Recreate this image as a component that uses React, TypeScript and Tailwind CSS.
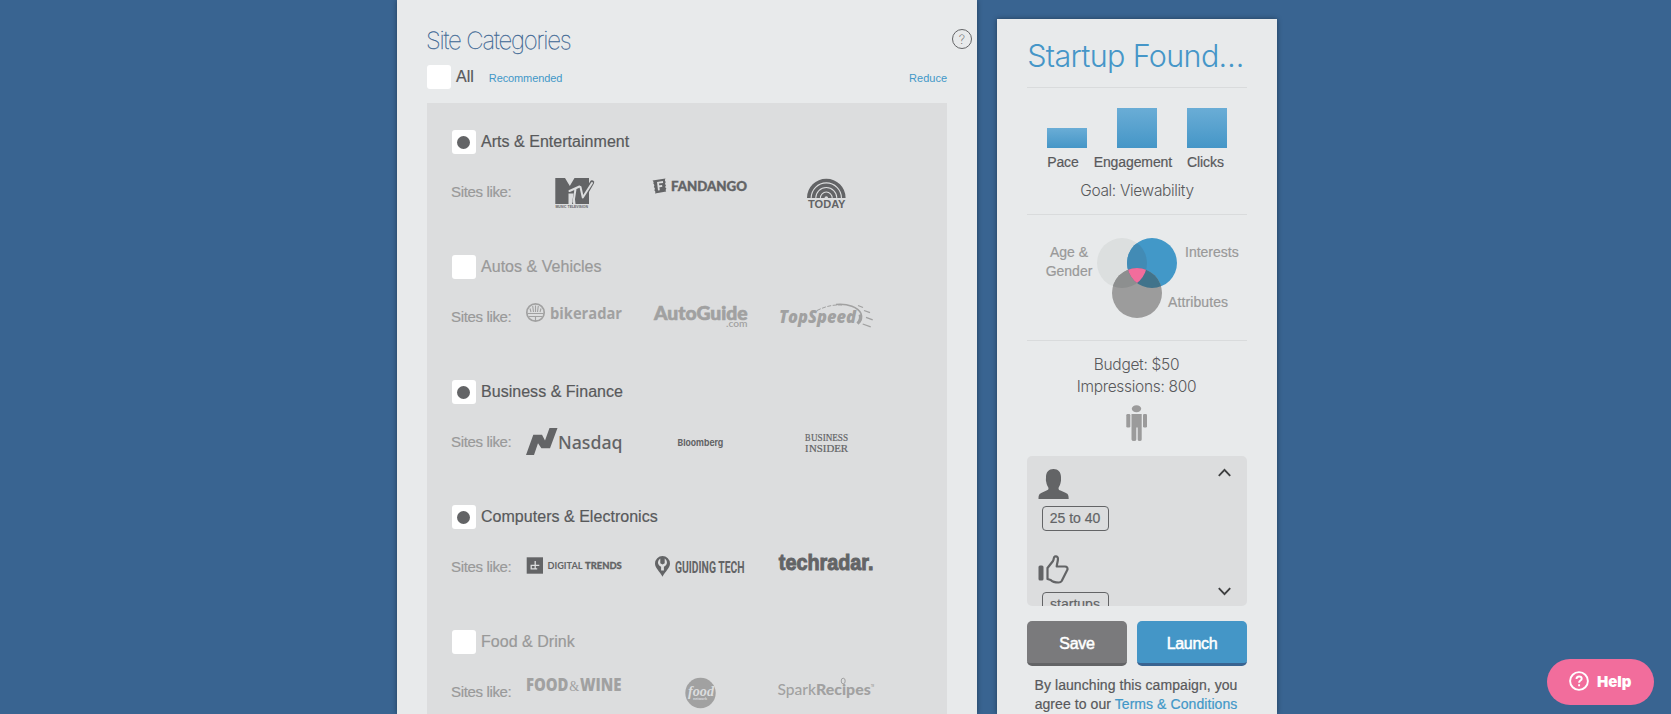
import type { ReactNode } from "react";

type Category = {
  name: string;
  checked: boolean;
  logos: ReactNode[];
};

const SANS = "font-['Liberation_Sans',Arial,sans-serif]";
const INTER = "font-['Inter',sans-serif]";

function Logo({ children }: { children: ReactNode }) {
  return (
    <svg width="96" height="32" viewBox="0 0 96 32" fill="currentColor" className="shrink-0 overflow-visible">
      {children}
    </svg>
  );
}

// Text stretched to the exact width of a wordmark
function Word({
  x,
  y,
  w,
  size,
  font = "Liberation Sans",
  weight = 700,
  italic = false,
  fill,
  children,
}: {
  x: number;
  y: number;
  w: number;
  size: number;
  font?: string;
  weight?: number;
  italic?: boolean;
  fill?: string;
  children: string;
}) {
  return (
    <text
      x={x}
      y={y}
      textLength={w}
      lengthAdjust="spacingAndGlyphs"
      fontSize={size}
      fontFamily={`"${font}", sans-serif`}
      fontWeight={weight}
      fontStyle={italic ? "italic" : "normal"}
      fill={fill}
    >
      {children}
    </text>
  );
}

const categories: Category[] = [
  {
    name: "Arts & Entertainment",
    checked: true,
    logos: [
      <Logo key="mtv">
        <path d="M29.3 0H39l4.8 8L48.500 0H63v26H49.500l-1-9-1.500 9h-5V15v11H29.3z" />
        <path d="M42.500 15.500h5L46 26h-3.500z" fill="#dcddde" />
        <path d="M54 8.500 57 20 66 4.500" fill="none" stroke="currentColor" strokeWidth="4.4" strokeLinecap="round" />
        <g fill="none" stroke="#dcddde" strokeWidth="2" strokeLinecap="round" strokeLinejoin="round">
          <path d="M43.500 13 53.500 8.500M49.500 11 47.500 24M54.500 9l2.300 10.500L66 5" />
        </g>
        <Word x={29.5} y={30} w={32.5} size={4}>MUSIC TELEVISION</Word>
      </Logo>,
      <Logo key="fandango">
        <path d="M.5 2.5 13.5.5c-.8 1.500-.8 2.500.3 3.500-1 1.200-1 2.400.2 3.300-1 1.300-1 2.300.4 3.200-.9 1-.9 1.900-.2 2.900L3 15.500c.7-1.500.4-2.500-.7-3.300 1-1.200.7-2.300-.5-3.200.9-1.300.7-2.500-.5-3.200.6-1.100.3-2.100-.8-3.300z" />
        <path d="M11 4 6 4.700l.9 7.600M6.500 8.500l3.700-.6" stroke="#dcddde" strokeWidth="1.8" fill="none" />
        <g stroke="currentColor" strokeWidth="0.4">
          <Word x={19} y={13.2} w={76} size={14} font="Lato" weight={900}>FANDANGO</Word>
        </g>
      </Logo>,
      <Logo key="today">
        <g fill="none" stroke="currentColor" strokeWidth="3.6">
          <path d="M30.8 20a17.5 17.5 0 0 1 35 0M35.5 20a12.8 12.8 0 0 1 25.6 0M40.1 20a8.2 8.2 0 0 1 16.4 0" />
          <path d="M44.7 20a3.6 3.6 0 0 1 7.2 0" />
        </g>
        <Word x={30} y={30} w={37.5} size={11.8}>TODAY</Word>
      </Logo>,
    ],
  },
  {
    name: "Autos & Vehicles",
    checked: false,
    logos: [
      <Logo key="bikeradar">
        <circle cx="9.5" cy="9.5" r="8.7" fill="none" stroke="currentColor" strokeWidth="1.7" />
        <path d="M1.5 10.5h16M2.5 13.5h14M9.5 13v5M5 9 4 5.5M7.5 9l-.8-6M9.5 9V2.5M11.5 9l.8-6M14 9l1-3.5" stroke="currentColor" strokeWidth="1.1" fill="none" />
        <Word x={24} y={15.7} w={72} size={16.5} font="Open Sans" weight={700}>bikeradar</Word>
      </Logo>,
      <Logo key="autoguide">
        <g stroke="currentColor" strokeWidth="0.6">
          <Word x={2} y={17} w={93.5} size={18} font="Lato" weight={900}>AutoGuide</Word>
        </g>
        <Word x={74} y={24} w={21.5} size={8.5} font="Lato" weight={600}>.com</Word>
      </Logo>,
      <Logo key="topspeed">
        <Word x={1} y={20} w={77} size={17.5} font="Open Sans" weight={800} italic>TopSpeed</Word>
        <path d="M39 7.5C48 3 56 1.5 64 2" fill="none" stroke="currentColor" strokeWidth="1" strokeDasharray="4 1.5" />
        <path d="M58 1.5c12-1 22 2.5 25 9 1.500 4 0 8-3 10.500" fill="none" stroke="currentColor" strokeWidth="1.6" />
        <path d="M82 11.5c1 3 0 6.500-2.500 9" fill="none" stroke="currentColor" strokeWidth="3" />
        <path d="m80 2.5 5 2M86 7.5l6 2.200M88 14.3l6.700 2.500M84.700 21l8 2.800" stroke="currentColor" strokeWidth="1.3" />
      </Logo>,
    ],
  },
  {
    name: "Business & Finance",
    checked: true,
    logos: [
      <Logo key="nasdaq">
        <path d="M0 27 7.3 6.7H16L19 12.5 23.5 0h8L24 20.3h-8.600L12 15.300 8 27z" />
        <Word x={32} y={20.7} w={64.5} size={18.5} font="Noto Sans" weight={500}>Nasdaq</Word>
      </Logo>,
      <Logo key="bloomberg">
        <Word x={25.5} y={18} w={45.8} size={9.4} font="Inter" weight={700}>Bloomberg</Word>
      </Logo>,
      <Logo key="bi">
        <g stroke="currentColor" strokeWidth="0.2">
          <Word x={27} y={13.3} w={5.5} size={11} font="Liberation Serif" weight={400}>B</Word>
          <Word x={33} y={13.3} w={37} size={9.5} font="Liberation Serif" weight={400}>USINESS</Word>
          <Word x={27} y={24} w={3.5} size={11} font="Liberation Serif" weight={400}>I</Word>
          <Word x={31} y={24} w={39} size={9.5} font="Liberation Serif" weight={400}>NSIDER</Word>
        </g>
      </Logo>,
    ],
  },
  {
    name: "Computers & Electronics",
    checked: true,
    logos: [
      <Logo key="dt">
        <path d="M.7 4.3H17v16.4H.7z" />
        <path d="M9.200 8v8.500M9.200 12.300H13.300M9.200 12.300H5.200v3.600h6" fill="none" stroke="#dcddde" strokeWidth="1.3" />
        <Word x={21.5} y={15.7} w={35} size={9.8} font="Lato" weight={700}>DIGITAL</Word>
        <g stroke="currentColor" strokeWidth="0.3">
          <Word x={59} y={15.7} w={36.7} size={9.8} font="Lato" weight={900}>TRENDS</Word>
        </g>
      </Logo>,
      <Logo key="guiding">
        <path d="M10.5 3a7.500 7.500 0 0 1 7.500 7.500c0 4.500-4.800 8-7.500 13.200C7.800 18.500 3 15 3 10.500A7.500 7.500 0 0 1 10.500 3z" />
        <path d="M8.300 5.500c-3.300 2.500-3 6.500.8 8.300v3.700h2.800v-3.700c3.800-1.800 4.100-5.800.8-8.300v4.700l-2.200 1.300-2.200-1.300z" fill="#dcddde" />
        <path d="M9.300 5h2.400v5l-1.200.8-1.200-.8z" />
        <Word x={23} y={19.7} w={69.5} size={16.8} font="Roboto" weight={700}>GUIDING TECH</Word>
      </Logo>,
      <Logo key="techradar">
        <g stroke="currentColor" strokeWidth="1">
          <Word x={0.8} y={16.7} w={94.7} size={22.5}>techradar.</Word>
        </g>
      </Logo>,
    ],
  },
  {
    name: "Food & Drink",
    checked: false,
    logos: [
      <Logo key="fw">
        <Word x={0} y={13.3} w={42.5} size={17.2} font="Open Sans" weight={800}>FOOD</Word>
        <Word x={43.2} y={13.3} w={10} size={14} font="Liberation Serif" weight={400}>&amp;</Word>
        <Word x={54} y={13.3} w={41.5} size={17.2} font="Open Sans" weight={800}>WINE</Word>
      </Logo>,
      <Logo key="food">
        <circle cx="48.5" cy="15" r="15.2" />
        <Word x={36} y={18} w={26} size={15} font="Liberation Serif" italic fill="#dcddde">food</Word>
        <Word x={41} y={21.5} w={14} size={3.5} fill="#dcddde">network</Word>
      </Logo>,
      <Logo key="spark">
        <Word x={-0.5} y={16.7} w={38.5} size={15.5} font="Lato" weight={500}>Spark</Word>
        <Word x={38} y={16.7} w={54.7} size={15.5} font="Lato" weight={900}>Recipes</Word>
        <ellipse cx="65.2" cy="3" rx="2" ry="2.8" fill="#dcddde" stroke="currentColor" />
        <Word x={93} y={9} w={3} size={3}>TM</Word>
      </Logo>,
    ],
  },
];

const bars = [
  { label: "Pace", height: 20 },
  { label: "Engagement", height: 40 },
  { label: "Clicks", height: 40 },
];

function Checkbox({ checked = false }: { checked?: boolean }) {
  return (
    <span className="flex size-6 shrink-0 items-center justify-center rounded-[3px] bg-white">
      {checked && <span className="mr-px size-[13px] rounded-full bg-[#636466]" />}
    </span>
  );
}

function CategoryRow({ name, checked, logos }: Category) {
  return (
    <section className="h-[125px]">
      <div className="flex h-6 items-center gap-[5px]">
        <Checkbox checked={checked} />
        <span className={`text-[16px] leading-6 tracking-[0.03px] [-webkit-text-stroke:0.2px] ${checked ? "text-[#58595b]" : "text-[#999]"}`}>{name}</span>
      </div>
      <div className="mt-6 flex">
        <span className="mt-1 -ml-px w-[75px] shrink-0 text-[15px] leading-5 tracking-[-0.35px] text-[#999] [-webkit-text-stroke:0.2px]">Sites like:</span>
        <div className={`flex gap-[30px] ${checked ? "text-[#636466]" : "text-[#a1a1a1]"}`}>{logos}</div>
      </div>
    </section>
  );
}

function Venn() {
  return (
    <svg width="80" height="80" viewBox="0 0 80 80" className="mx-auto block">
      <defs>
        <clipPath id="left">
          <circle cx="25" cy="25" r="25" />
        </clipPath>
        <clipPath id="right">
          <circle cx="55" cy="25" r="25" />
        </clipPath>
      </defs>
      <circle cx="25" cy="25" r="25" fill="#dcdfdf" />
      <circle cx="55" cy="25" r="25" fill="#4298c8" />
      <circle cx="40" cy="55" r="25" fill="#9c9c9c" />
      <g clipPath="url(#left)">
        <circle cx="55" cy="25" r="25" fill="#428bb5" />
        <circle cx="40" cy="55" r="25" fill="#8d8f8f" />
      </g>
      <g clipPath="url(#right)">
        <circle cx="40" cy="55" r="25" fill="#41738b" />
        <g clipPath="url(#left)">
          <circle cx="40" cy="55" r="25" fill="#f26d9c" />
        </g>
      </g>
    </svg>
  );
}

function Summary() {
  return (
    <aside className="mt-[19px] h-[695px] w-[280px] overflow-hidden bg-[#e8eaeb] px-[30px] shadow-[0_0_5px_rgba(0,0,0,0.4)]">
      <h2 className={`${INTER} -ml-[3px] h-[68px] pt-[17px] text-center text-[30.5px] leading-10 font-light tracking-[-0.65px] whitespace-nowrap text-[#4596c8]`}>
        Startup Found…
      </h2>

      <div className="h-[127px] border-t border-[#d9dbdc] pt-5">
        <div className="flex h-10 items-end justify-center gap-[30px]">
          {bars.map((bar) => (
            <div key={bar.label} className="w-10 bg-linear-to-b from-[#6aadd6] to-[#4496c7]" style={{ height: bar.height }} />
          ))}
        </div>
        <div className="mt-1 -ml-[3px] flex justify-center gap-[15px] text-[14px] leading-5 tracking-[-0.1px] text-[#58595b] [-webkit-text-stroke:0.2px]">
          {bars.map((bar) => (
            <span key={bar.label}>{bar.label}</span>
          ))}
        </div>
        <p className={`${INTER} mt-[9px] text-center text-[15.5px] leading-5 font-light tracking-[-0.35px] text-[#58595b]`}>Goal: Viewability</p>
      </div>

      <div className="relative h-[126px] border-t border-[#d9dbdc] pt-[23px] text-[14px] leading-[19px] text-[#999] [-webkit-text-stroke:0.2px]">
        <Venn />
        <span className="absolute top-[28px] left-[12px] w-[60px] text-center">Age &amp; Gender</span>
        <span className="absolute top-[28px] left-[158px]">Interests</span>
        <span className="absolute top-[78px] left-[141px] tracking-[0.1px]">Attributes</span>
      </div>

      <div className={`${INTER} h-[116px] border-t border-[#d9dbdc] pt-[13px] text-center text-[15.5px] leading-[22px] font-light tracking-[-0.3px] text-[#58595b]`}>
        <p className="-ml-px">Budget: $50</p>
        <p className="-ml-px">Impressions: 800</p>
        <svg width="22" height="36" viewBox="0 0 22 36" fill="#9b9b9b" className="mx-auto mt-[7px]">
          <ellipse cx="10.5" cy="3.8" rx="4.7" ry="3.5" />
          <rect x="0.3" y="9" width="4" height="13.5" rx="1.2" />
          <rect x="17" y="9" width="4" height="13.5" rx="1.2" />
          <path d="M5.5 9h10.200v25.500q0 1.500-2 1.500t-2-1.500V22.500h-1.400v12q0 1.500-2.300 1.500t-2.500-1.500z" />
        </svg>
      </div>

      <div className="flex h-[150px] justify-between overflow-hidden rounded-[5px] bg-[#dcddde] pr-4 pl-[11px]">
        <div className="pt-[13px] text-[#636466]">
          <svg width="31" height="30" viewBox="0 0 31 30" fill="currentColor">
            <path d="M15.5 0c4.700 0 7.500 3 7.500 8 0 2.500.2 3.200-.2 4.800-.4 3-1.700 4.800-2.300 6.200 0 1.700.6 2 2 2.600l5.500 2.400c2 1 2.700 2.200 2.700 6H.5c0-3.800.7-5 2.700-6l5.300-2.400c1.500-.7 2-1 2-2.600-.6-1.400-2-3.200-2.300-6.200C7.700 11.200 8 10.500 8 8c0-5 2.800-8 7.500-8z" />
          </svg>
          <div className="mt-[7px] ml-1 flex h-[25px] w-[67px] items-center justify-center rounded-[4px] border border-[#636466] pr-px pb-0.5 text-[14px] leading-none [-webkit-text-stroke:0.2px]">25 to 40</div>
          <svg width="31" height="29" viewBox="0 0 31 29" className="mt-6">
            <rect x="0.5" y="10.5" width="5" height="15" rx="1.5" fill="currentColor" />
            <path d="M9.5 13 15 6c.8-1.500.5-2.500 1.200-3.800.8-1.300 3.200-1 3.700.8.400 2.500-1 5.500-1.200 8.500H27c2 0 2.700 1.200 2.500 3L23.700 26q-1 1.500-3 1.500c-4.500 0-6.200-.5-8-2.500l-3.200-1z" fill="none" stroke="currentColor" strokeWidth="2.2" strokeLinejoin="round" />
          </svg>
          <div className="mt-2 ml-1 flex h-[25px] w-[67px] items-center justify-center rounded-[4px] border border-[#636466] pr-px pb-0.5 text-[14px] leading-none [-webkit-text-stroke:0.2px]">startups</div>
        </div>
        <div className="flex flex-col justify-between pt-3 pb-[10px] text-[#3f4041]">
          <svg width="13" height="9" viewBox="0 0 13 9" fill="none" stroke="currentColor" strokeWidth="1.9">
            <path d="m.8 7.8 5.700-6 5.700 6" />
          </svg>
          <svg width="13" height="9" viewBox="0 0 13 9" fill="none" stroke="currentColor" strokeWidth="1.9">
            <path d="m.8 1.2 5.700 6 5.700-6" />
          </svg>
        </div>
      </div>

      <div className="mt-[15px] flex gap-2.5 text-[16px] tracking-[-0.3px] text-white">
        <button className="h-[45px] w-[100px] rounded-[5px] border-b-[3px] border-[#636466] bg-[#7a7a7c] pt-[3px] [-webkit-text-stroke:0.5px_white]">Save</button>
        <button className="h-[45px] w-[110px] rounded-[5px] border-b-[3px] border-[#396491] bg-[#4496c7] pt-[3px] [-webkit-text-stroke:0.5px_white]">Launch</button>
      </div>
      <p className="-mr-1 -ml-1.5 mt-[10px] text-center text-[14px] leading-[19px] tracking-[0.07px] whitespace-nowrap text-[#58595b] [-webkit-text-stroke:0.2px]">
        By launching this campaign, you
        <br />
        agree to our <a className="text-[#4298c8]">Terms &amp; Conditions</a>
      </p>
    </aside>
  );
}

export default function App() {
  return (
    <div className={`${SANS} relative flex h-[714px] w-[1671px] gap-5 overflow-hidden bg-[#396491] pl-[397px]`}>
      <main className="h-[714px] w-[580px] overflow-hidden bg-[#e8eaeb] px-[30px] shadow-[0_0_5px_rgba(0,0,0,0.4)]">
        <header className="flex h-[65px] items-start justify-between pt-6">
          <h1 className={`${INTER} mt-px -ml-px text-[24px] leading-8 font-thin tracking-[-1.15px] text-[#396491] [-webkit-text-stroke:0.3px_#396491]`}>Site Categories</h1>
          <span className={`${INTER} mt-[5px] -mr-[25px] flex size-5 items-center justify-center rounded-full border border-[#636466] text-[13px] leading-none font-extralight text-[#636466]`}>
            ?
          </span>
        </header>
        <div className="flex h-6 items-center">
          <Checkbox />
          <span className="ml-[5px] text-[16px] leading-6 text-[#58595b] [-webkit-text-stroke:0.2px]">All</span>
          <a className="ml-[15px] pt-[2px] text-[11px] tracking-[-0.1px] text-[#4298c8]">Recommended</a>
          <a className="ml-auto pt-[2px] text-[11px] text-[#4298c8]">Reduce</a>
        </div>
        <div className="mt-[14px] h-[640px] bg-[#dcddde] pt-[27px] pl-[25px]">
          {categories.map((category) => (
            <CategoryRow key={category.name} {...category} />
          ))}
        </div>
      </main>

      <Summary />

      <button className="absolute right-[17px] bottom-[9px] flex h-[46px] w-[107px] items-center rounded-full bg-[#f26d9c] pl-[22px] text-white">
        <svg width="20" height="20" viewBox="0 0 20 20" fill="none" stroke="currentColor" strokeWidth="1.9" className="-mt-[2px]">
          <circle cx="10" cy="10" r="8.9" />
          <path d="M7.5 8c0-3.500 5.200-3.200 5.200-.3 0 2-2.600 1.800-2.600 4M10.100 13.300v1.900" />
        </svg>
        <span className={`${INTER} ml-2 text-[15px] leading-5 font-black`}>Help</span>
      </button>
    </div>
  );
}
